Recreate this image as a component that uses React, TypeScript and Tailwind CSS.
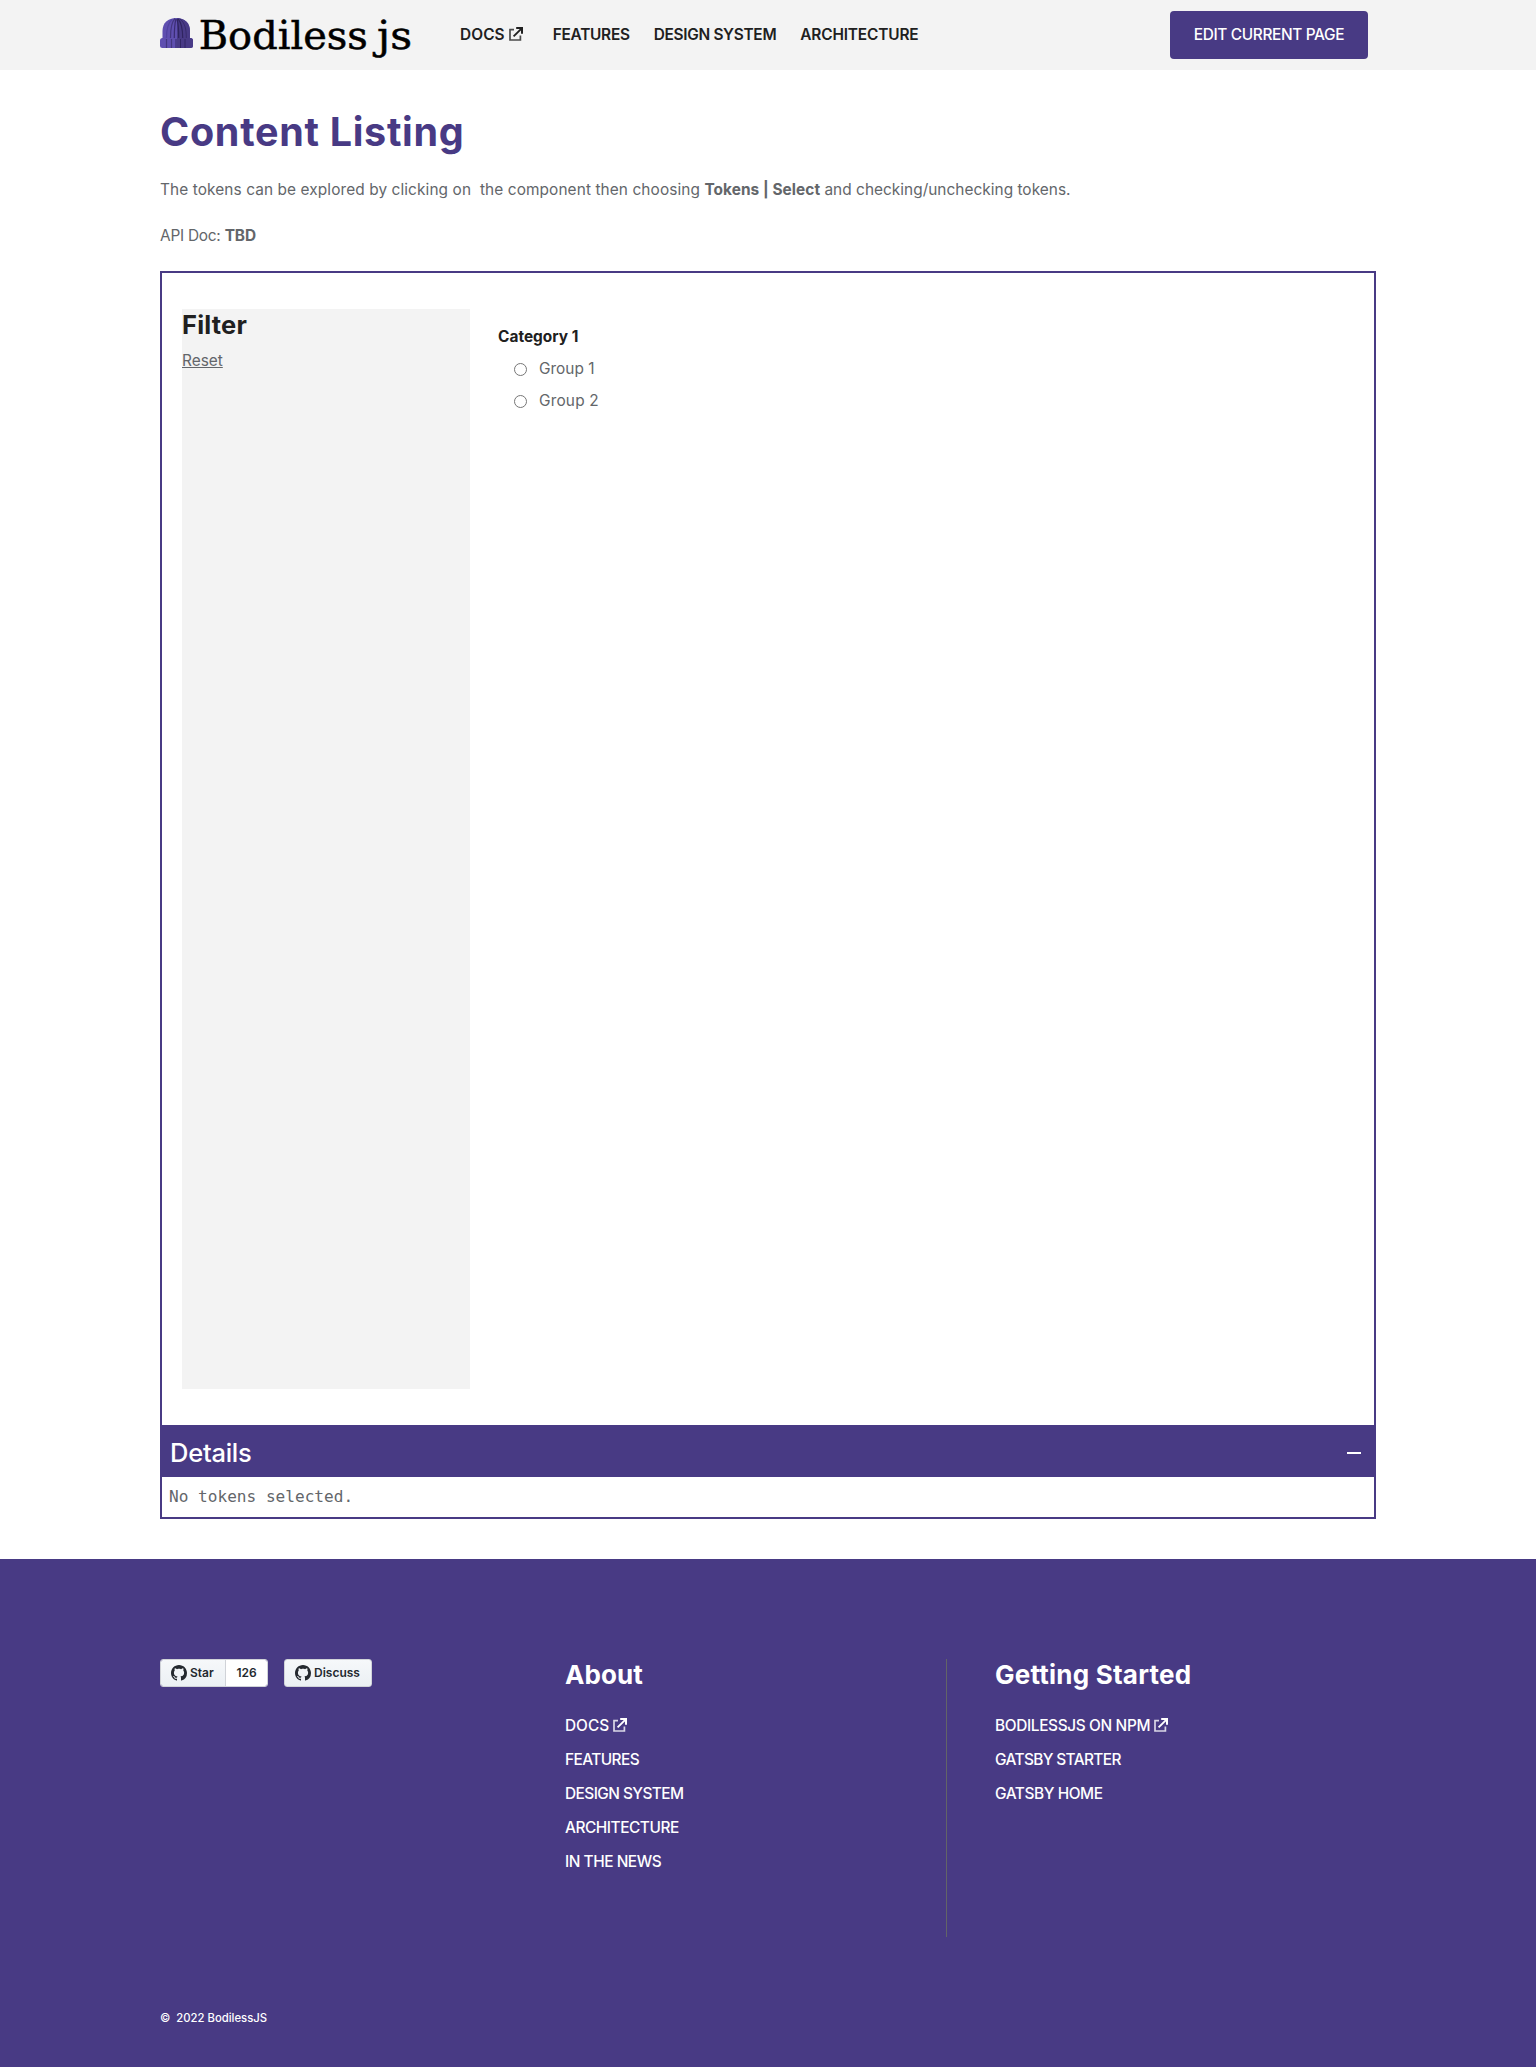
import React from "react";

function ExternalIcon({ className }: { className?: string }) {
  return (
    <svg className={className} width="14" height="14" viewBox="0 0 14 14" fill="none" stroke="currentColor" aria-hidden="true">
      <path d="M5 2.7H1V13H11.4V8.6" strokeWidth="1.7" strokeOpacity="0.8" />
      <path d="M4.6 9.4L12.2 1.8" strokeWidth="1.9" />
      <path d="M7.2 1H13V6.800" strokeWidth="2" />
    </svg>
  );
}

function GithubMark() {
  return (
    <svg width="16" height="16" viewBox="0 0 16 16" fill="#24292f" aria-hidden="true">
      <path d="M8 0C3.58 0 0 3.58 0 8c0 3.54 2.29 6.53 5.47 7.59.4.07.55-.17.55-.38 0-.19-.01-.82-.01-1.49-2.01.37-2.53-.49-2.69-.94-.09-.23-.48-.94-.82-1.13-.28-.15-.68-.52-.01-.53.63-.01 1.08.58 1.23.82.72 1.21 1.87.87 2.33.66.07-.52.28-.87.51-1.07-1.78-.2-3.64-.89-3.64-3.95 0-.87.31-1.59.82-2.15-.08-.2-.36-1.02.08-2.12 0 0 .67-.21 2.2.82.64-.18 1.32-.27 2-.27s1.36.09 2 .27c1.53-1.04 2.2-.82 2.2-.82.44 1.1.16 1.92.08 2.12.51.56.82 1.27.82 2.15 0 3.07-1.87 3.75-3.65 3.95.29.25.54.73.54 1.48 0 1.07-.01 1.93-.01 2.2 0 .21.15.46.55.38A8.01 8.01 0 0 0 16 8c0-4.42-3.58-8-8-8z" />
    </svg>
  );
}

function Logo() {
  return (
    <svg width="254" height="48" viewBox="0 0 254 48" role="img" aria-label="Bodiless js">
      {/* knitted hat */}
      <path d="M2.5 28V20C2.5 12 8 7 16.3 7S30 12 30 20V28Z" fill="#5f4fb0" />
      <path d="M16.3 7C24.5 7 30 12 30 20V28H17V7Z" fill="#483a86" />
      <rect x="0" y="27" width="33" height="10" rx="2.5" fill="#5f4fb0" />
      <path d="M17 27H30.5A2.5 2.5 0 0 1 33 29.500V34.500A2.500 2.500 0 0 1 30.500 37H17Z" fill="#483a86" />
      <g fill="none" stroke="#2f2460" strokeWidth="1.2">
        <path d="M15 7.500C11.500 11 10.500 18 10.500 27" stroke="#43367f" />
        <path d="M16 8C14.500 13 14.300 19 14.300 27" stroke="#3a2d72" />
        <path d="M17 8C18.500 13 18.700 19 18.700 27" />
        <path d="M18 7.800C22 12 22.700 19 22.700 27" />
        <path d="M20 8C25 12 26.300 18 26.300 27" strokeWidth="0.7" />
        <path d="M12 8.500C8 12 6.500 18 6.500 27" stroke="#5142a0" />
        <path d="M6.500 28V37M11.500 28V37" stroke="#43367f" />
        <path d="M16 28V37M20.500 28V37M25 28V37" strokeWidth="0.9" />
      </g>
      <g fill="#000" stroke="#000" strokeWidth="0.5" fontFamily="DejaVu Serif, serif" fontSize="39.5">
        <text x="38.800" y="38" textLength="169" lengthAdjust="spacingAndGlyphs">Bodiless</text>
        <text x="217" y="38" textLength="35" lengthAdjust="spacingAndGlyphs">js</text>
      </g>
    </svg>
  );
}

function Group({ label, tracking }: { label: string; tracking: string }) {
  return (
    <label className="ml-4 flex h-6 items-center gap-3">
      <span className="size-[13px] rounded-full border border-[#767676] bg-white" />
      <span className={tracking}>{label}</span>
    </label>
  );
}

export default function App() {
  return (
    <div className="flex min-h-[2067px] flex-col bg-white font-['Inter',sans-serif] text-[15.4px] leading-6 text-[#63666a]">
      <header className="h-[70px] bg-[#f3f3f3]">
        <div className="mx-auto flex h-full w-[1216px] items-center">
          <Logo />
          <nav className="ml-[46px] flex items-center font-semibold text-[#202020]">
            <a className="flex items-center tracking-[0.1px]">
              DOCS
              <ExternalIcon className="ml-1 -mt-0.5" />
            </a>
            <a className="ml-[30px] tracking-[-0.26px]">FEATURES</a>
            <a className="ml-6 tracking-[-0.3px]">DESIGN SYSTEM</a>
            <a className="ml-6 tracking-[-0.15px]">ARCHITECTURE</a>
          </nav>
          <button className="mr-2 ml-auto h-12 w-[198px] rounded bg-[#483a84] font-medium tracking-[-0.34px] text-white">
            EDIT CURRENT PAGE
          </button>
        </div>
      </header>

      <main className="mx-auto w-[1216px] pt-[38px]">
        <h1 className="text-[39.5px] leading-[48px] font-bold tracking-[0.7px] text-[#483a84]">Content Listing</h1>
        <p className="mt-[22px] whitespace-pre">
          <span className="tracking-[0.1px]">{"The tokens can be explored by clicking on \u00a0the component then choosing "}</span>
          <b className="tracking-[0.06px]">Tokens | Select</b>
          <span className="tracking-[0.03px]">{" and checking/unchecking tokens."}</span>
        </p>
        <p className="mt-[22px] whitespace-pre">
          <span className="tracking-[-0.24px]">{"API Doc: "}</span>
          <b className="tracking-[-0.1px]">TBD</b>
        </p>

        <section className="mt-[23px] border-2 border-[#483a84]">
          <div className="flex px-5 py-9">
            <aside className="h-[1080px] w-72 bg-[#f3f3f3]">
              <h2 className="text-[25.5px] leading-8 font-bold tracking-[0.2px] text-[#202020]">Filter</h2>
              <a className="mt-2 inline-block underline">Reset</a>
            </aside>
            <div className="ml-7 flex flex-col gap-2 pt-4">
              <h3 className="font-bold tracking-[0.03px] text-[#202020]">Category 1</h3>
              <Group label="Group 1" tracking="tracking-[0.04px]" />
              <Group label="Group 2" tracking="tracking-[0.2px]" />
            </div>
          </div>
          <div className="flex h-[52px] items-center justify-between bg-[#483a84] pr-[13px] pl-2 text-white">
            <span className="pt-[3px] text-[25.5px] leading-8 font-medium tracking-[-0.25px]">Details</span>
            <span className="mt-1 h-0.5 w-3.5 bg-white" />
          </div>
          <pre className="h-10 pt-2 pl-[7px] font-['DejaVu_Sans_Mono',monospace] text-[16.1px] leading-6">No tokens selected.</pre>
        </section>
      </main>

      <footer className="mt-10 h-[508px] bg-[#483a84] font-medium text-white">
        <div className="mx-auto flex h-full w-[1216px] flex-col pt-[100px]">
          <div className="flex h-[278px]">
            <div className="flex w-[405px] gap-4 text-[12px] font-semibold text-[#24292f]">
              <div className="flex h-7 overflow-hidden rounded-[3px] border border-[#d0d3d8]">
                <a className="flex w-[65px] items-center gap-[3px] border-r border-[#d0d3d8] bg-linear-to-b from-[#f6f8fa] to-[#ebf0f4] pl-2.5">
                  <GithubMark />
                  Star
                </a>
                <a className="flex w-[41px] items-center justify-center bg-white">126</a>
              </div>
              <a className="flex h-7 w-[88px] items-center gap-[3px] rounded-[3px] border border-[#d0d3d8] bg-linear-to-b from-[#f6f8fa] to-[#ebf0f4] pl-2.5">
                <GithubMark />
                Discuss
              </a>
            </div>
            <div className="flex w-[382px] flex-col gap-2.5 border-r border-[#636467] tracking-[-0.45px]">
              <h2 className="mb-[13px] text-[26px] leading-8 font-bold tracking-[0.1px]">About</h2>
              <a className="flex items-center tracking-[0px]">
                DOCS
                <ExternalIcon className="ml-1 -mt-0.5" />
              </a>
              <a className="tracking-[-0.55px]">FEATURES</a>
              <a className="tracking-[-0.55px]">DESIGN SYSTEM</a>
              <a>ARCHITECTURE</a>
              <a>IN THE NEWS</a>
            </div>
            <div className="ml-12 flex flex-col gap-2.5">
              <h2 className="mb-[13px] text-[26px] leading-8 font-bold tracking-[0.22px]">Getting Started</h2>
              <a className="flex items-center tracking-[-0.35px]">
                BODILESSJS ON NPM
                <ExternalIcon className="ml-1 -mt-0.5" />
              </a>
              <a className="tracking-[-0.62px]">GATSBY STARTER</a>
              <a className="tracking-[-0.42px]">GATSBY HOME</a>
            </div>
          </div>
          <p className="mt-[73px] text-[11.3px] leading-4 whitespace-pre">{"©  2022 BodilessJS"}</p>
        </div>
      </footer>
    </div>
  );
}
